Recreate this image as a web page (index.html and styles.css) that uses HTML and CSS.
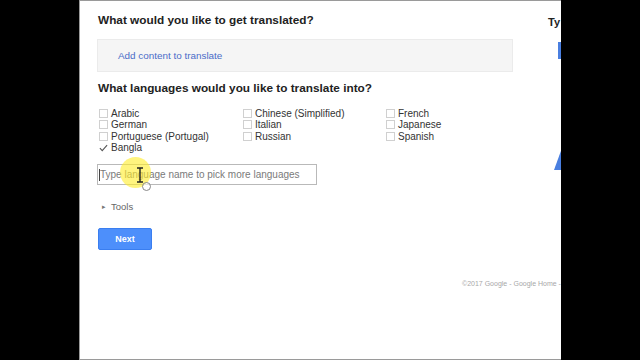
FILE: index.html
```html
<!DOCTYPE html>
<html>
<head>
<meta charset="utf-8">
<link rel="stylesheet" href="styles.css">
</head>
<body>
<div class="screen">
  <main class="page">
    <h1 class="q">What would you like to get translated?</h1>
    <div class="drop"><span class="add">Add content to translate</span></div>
    <h2 class="q">What languages would you like to translate into?</h2>
    <div class="langs">
      <div class="lang"><span class="box"></span>Arabic</div>
      <div class="lang"><span class="box"></span>Chinese (Simplified)</div>
      <div class="lang"><span class="box"></span>French</div>
      <div class="lang"><span class="box"></span>German</div>
      <div class="lang"><span class="box"></span>Italian</div>
      <div class="lang"><span class="box"></span>Japanese</div>
      <div class="lang"><span class="box"></span>Portuguese (Portugal)</div>
      <div class="lang"><span class="box"></span>Russian</div>
      <div class="lang"><span class="box"></span>Spanish</div>
      <div class="lang"><span class="box checked"><svg viewBox="0 0 10 10" width="10" height="10"><path d="M1 5.2 L3.6 8 L9 1.8" fill="none" stroke="#555" stroke-width="1.2"/></svg></span>Bangla</div>
    </div>
    <div class="picker">
      <span class="caret"></span><span class="ph">Type language name to pick more languages</span>
      <span class="glow"></span>
      <svg class="ibeam" viewBox="0 0 8 16" width="8" height="16"><path d="M1 1 H7 M4 1 V15 M1 15 H7" fill="none" stroke="#222" stroke-width="1.4"/></svg>
      <span class="ring"></span>
    </div>
    <div class="tools"><span class="tri">&#9656;</span>Tools</div>
    <button class="next">Next</button>
    <footer class="foot">©2017 Google - Google Home -</footer>
  </main>
  <aside class="side">
    <div class="ty">Ty</div>
    <div class="bluebtn"></div>
    <svg class="arrow" viewBox="0 0 12 24" width="12" height="24"><path d="M10 0 L2 22 L12 22 Z" fill="#4a7fe0"/></svg>
  </aside>
</div>
</body>
</html>
```

FILE: styles.css
```css
html, body {
  margin: 0;
  padding: 0;
  background: #000;
  width: 640px;
  height: 360px;
  overflow: hidden;
}
body {
  display: flex;
  font-family: "Liberation Sans", Arial, sans-serif;
}
.screen {
  margin-left: 79px;
  width: 482px;
  height: 360px;
  box-sizing: border-box;
  background: #fff;
  border: 1px solid #9a9a9a;
  border-right: none;
  display: flex;
  overflow: hidden;
}
.page {
  flex: none;
  width: 468px;
  min-width: 0;
  box-sizing: border-box;
  padding: 11px 0 0 17px;
  display: flex;
  flex-direction: column;
  align-items: flex-start;
}
.q {
  margin: 0;
  padding-left: 1px;
  font-size: 11.8px;
  line-height: 16px;
  font-weight: bold;
  color: #222;
}
.drop {
  margin-top: 11px;
  width: 416px;
  height: 33px;
  box-sizing: border-box;
  background: #f5f5f5;
  border: 1px solid #ebebeb;
  display: flex;
  align-items: center;
  padding-left: 20px;
}
.add {
  font-size: 9.9px;
  color: #4a6cc8;
}
h2.q {
  margin-top: 8px;
}
.langs {
  margin-top: 12px;
  display: grid;
  grid-template-columns: 144px 143px 120px;
  font-size: 10px;
  line-height: 11.33px;
  color: #333;
}
.lang {
  display: flex;
  align-items: center;
  white-space: nowrap;
}
.box {
  width: 9px;
  height: 9px;
  box-sizing: border-box;
  border: 1px solid #d0d0d0;
  margin: 0 3px 0 2px;
  flex: none;
}
.box.checked {
  border: none;
  display: flex;
  align-items: center;
  justify-content: center;
}
.picker {
  position: relative;
  margin-top: 11px;
  width: 220px;
  height: 21px;
  box-sizing: border-box;
  border: 1px solid #b9b9b9;
  display: flex;
  align-items: center;
  padding-left: 1px;
  font-size: 10px;
  color: #7a7a7a;
  white-space: nowrap;
}
.caret {
  width: 1px;
  height: 12px;
  background: #444;
}
.glow {
  position: absolute;
  left: 22px;
  top: -8px;
  width: 31px;
  height: 31px;
  border-radius: 50%;
  background: rgba(255, 236, 40, 0.6);
}
.ibeam {
  position: absolute;
  left: 38px;
  top: 2px;
}
.ring {
  position: absolute;
  left: 44px;
  top: 17px;
  width: 7px;
  height: 7px;
  border: 1px solid #888;
  border-radius: 50%;
  background: rgba(255,255,255,0.6);
}
.tools {
  margin-top: 16px;
  font-size: 9.5px;
  line-height: 12px;
  color: #666;
  display: flex;
  align-items: center;
  padding-left: 5px;
}
.tri {
  font-size: 7px;
  color: #777;
  margin-right: 5px;
}
.next {
  margin-top: 15px;
  margin-left: 1px;
  width: 54px;
  height: 22px;
  border: 1px solid #3a7ef0;
  border-radius: 2px;
  background: #4d8ffb;
  color: #fff;
  font-family: "Liberation Sans", Arial, sans-serif;
  font-size: 9px;
  font-weight: bold;
  padding: 0;
}
.foot {
  margin-top: 29px;
  margin-left: 365px;
  font-size: 7px;
  line-height: 9px;
  color: #a8a8a8;
  white-space: nowrap;
}
.side {
  flex: none;
  width: 40px;
  display: flex;
  flex-direction: column;
  align-items: flex-start;
  padding-top: 14px;
}
.ty {
  font-size: 11px;
  line-height: 14px;
  font-weight: bold;
  color: #222;
}
.bluebtn {
  margin-top: 13px;
  margin-left: 10px;
  width: 20px;
  height: 17px;
  background: #4a7fe0;
}
.arrow {
  margin-top: 89px;
  margin-left: 4px;
}
```
